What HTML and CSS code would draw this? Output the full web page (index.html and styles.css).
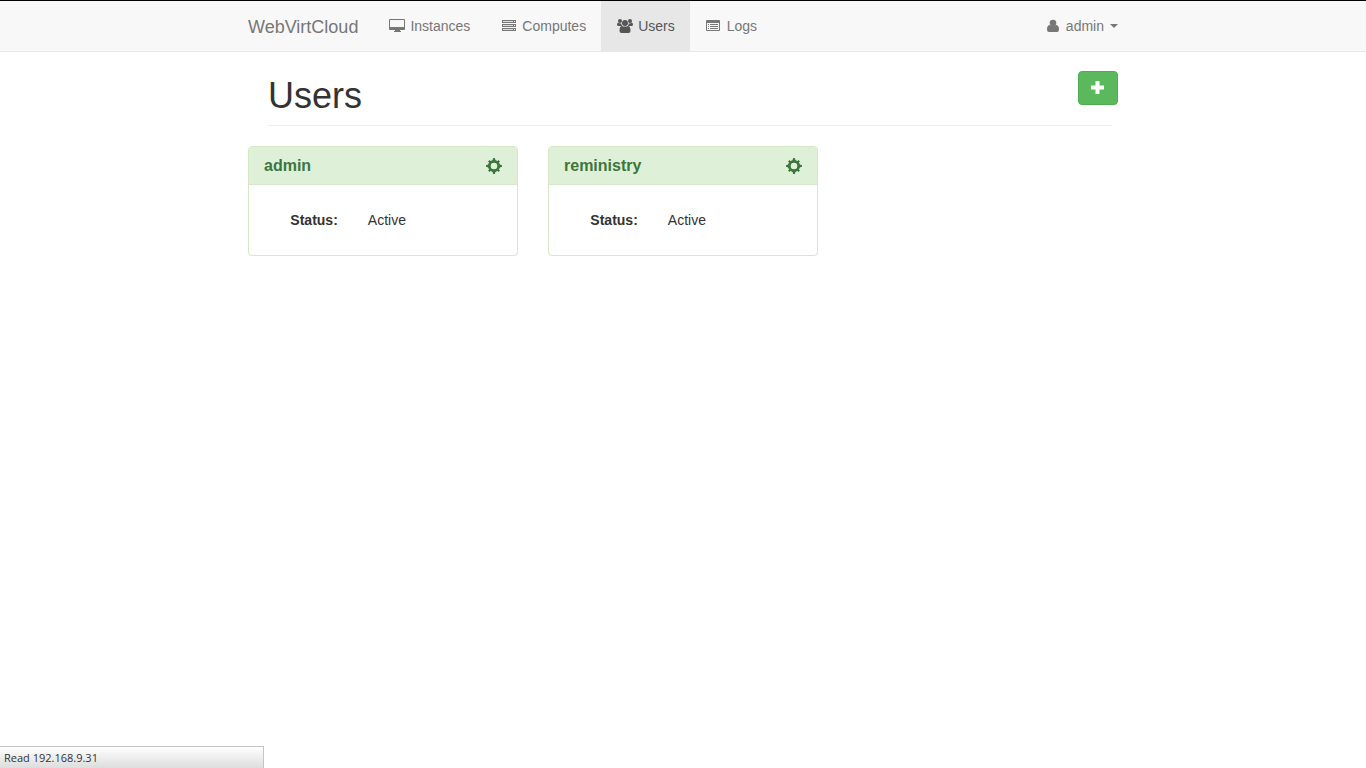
FILE: index.html
```html
<!DOCTYPE html>
<html lang="en">
<head>
<meta charset="utf-8">
<meta name="viewport" content="width=device-width, initial-scale=1">
<title>WebVirtCloud - Users</title>
<link rel="stylesheet" href="styles.css">
</head>
<body>
<svg class="sprite" aria-hidden="true">
  <symbol id="cog" viewBox="0 0 16 16">
    <circle cx="8" cy="8" r="4.700" fill="none" stroke="currentColor" stroke-width="2.800"/>
    <path fill="currentColor" d="M7.200 0h1.600l1 3H6.200zM7.200 16h1.600l1-3H6.200zM0 7.200v1.600l3 1V6.200zM16 7.200v1.600l-3 1V6.200z"/>
    <path stroke="currentColor" stroke-width="2.200" d="M2.800 2.800l2 2M11.200 11.200l2 2M2.800 13.200l2-2M11.200 4.800l2-2"/>
  </symbol>
</svg>
<nav class="navbar">
  <div class="container navbar-inner">
    <a class="brand" href="#">WebVirtCloud</a>
    <ul class="nav">
      <li><a class="nav-link" href="#">
        <svg class="icon" viewBox="0 0 18 14" fill="currentColor" aria-hidden="true"><path fill-rule="evenodd" d="M2 0h14q1 0 1 1v9q0 1-1 1h-4v1h1v1H6v-1h1v-1H2q-1 0-1-1V1q0-1 1-1zm0 1v7h14V1z"/></svg>
        Instances</a></li>
      <li><a class="nav-link" href="#">
        <svg class="icon" viewBox="0 0 18 14" fill="currentColor" aria-hidden="true"><path fill-rule="evenodd" d="M2 1h14v3H2zM3 2v1h10V2zM14 2v1h1V2zM2 5h14v3H2zM3 6v1h10V6zM14 6v1h1V6zM2 9h14v3H2zM3 10v1h10v-1zM14 10v1h1v-1z"/><path opacity=".2" d="M3 2h10v1H3zM3 6h10v1H3zM3 10h10v1H3z"/></svg>
        Computes</a></li>
      <li><a class="nav-link active" href="#" aria-current="page">
        <svg class="icon" viewBox="0 0 18 14" fill="currentColor" aria-hidden="true"><circle cx="4" cy="2" r="2"/><circle cx="14" cy="2" r="2"/><circle cx="9" cy="4" r="3"/><path d="M1 6q0-2.500 1.300-2.500Q4 4.800 5.200 4.300 5.300 6 6.200 7H2.500Q1 7 1 6zM17 6q0-2.500-1.300-2.500Q14 4.800 12.800 4.300 12.700 6 11.800 7h3.700Q17 7 17 6zM3.500 12q0-5 2.500-5 3 1 6 0 2.500 0 2.500 5 0 2-2 2h-7q-2 0-2-2z"/></svg>
        Users</a></li>
      <li><a class="nav-link" href="#">
        <svg class="icon" viewBox="0 0 18 14" fill="currentColor" aria-hidden="true"><path fill-rule="evenodd" d="M2 1h12q1 0 1 1v9q0 1-1 1H2q-1 0-1-1V2q0-1 1-1zm0 3v7h12V4z"/><path d="M3 5h1v1H3zM5 5h8v1H5zM3 7h1v1H3zM5 7h8v1H5zM3 9h1v1H3zM5 9h8v1H5z"/></svg>
        Logs</a></li>
    </ul>
    <button class="account" type="button" aria-haspopup="true">
      <svg class="icon" viewBox="0 0 18 14" fill="currentColor" aria-hidden="true"><circle cx="9" cy="4" r="3.300"/><path d="M3 10.500Q3 6 6 6q3 2 6 0 3 0 3 4.500 0 2.500-2 2.500H5q-2 0-2-2.500z"/></svg>
      admin
      <span class="caret"></span>
    </button>
  </div>
</nav>
<main class="container">
  <header class="page-header">
    <h1>Users</h1>
    <button class="add" type="button" aria-label="Add user">
      <svg viewBox="0 0 14 14" width="14" height="14" fill="currentColor" aria-hidden="true"><path d="M4.500 0h4v4.500H13v4H8.500V13h-4V8.500H0v-4h4.500z"/></svg>
    </button>
  </header>
  <div class="cards">
    <section class="card">
      <div class="card-head"><h2>admin</h2><button class="settings" type="button" aria-label="Edit admin"><svg width="16" height="16"><use href="#cog"/></svg></button></div>
      <dl class="card-body"><dt>Status:</dt><dd>Active</dd></dl>
    </section>
    <section class="card">
      <div class="card-head"><h2>reministry</h2><button class="settings" type="button" aria-label="Edit reministry"><svg width="16" height="16"><use href="#cog"/></svg></button></div>
      <dl class="card-body"><dt>Status:</dt><dd>Active</dd></dl>
    </section>
  </div>
</main>
<div class="status-bar" role="status">Read 192.168.9.31</div>
</body>
</html>
```
FILE: styles.css
```css
* {
  box-sizing: border-box;
}

body {
  margin: 0;
  border-top: 1px solid #000;
  background: #fff;
  color: #333;
  font: 14px/20px "Liberation Sans", Arial, sans-serif;
}

h1, h2, ul, dl, dd {
  margin: 0;
  padding: 0;
}

a {
  text-decoration: none;
}

button {
  padding: 0;
  border: 0;
  background: none;
  font: inherit;
  cursor: pointer;
}

.sprite {
  position: absolute;
  width: 0;
  height: 0;
}

.container {
  max-width: 900px;
  margin: 0 auto;
  padding: 0 15px;
}

.navbar {
  border-bottom: 1px solid #e7e7e7;
  background: #f8f8f8;
}

.navbar-inner,
.nav {
  display: flex;
}

.nav {
  list-style: none;
}

.brand {
  padding: 16px 15px 14px 0;
  color: #777;
  font-size: 18px;
}

.nav-link,
.account {
  display: flex;
  align-items: center;
  gap: 4px;
  padding: 15px;
  color: #777;
}

.nav-link.active {
  background: #e7e7e7;
  color: #555;
}

.account {
  margin-left: auto;
  padding-right: 0;
}

.icon {
  flex: none;
  width: 18px;
  height: 14px;
}

.caret {
  margin-left: 2px;
  border: 4px solid transparent;
  border-top-color: currentColor;
  border-bottom: 0;
}

.page-header {
  display: flex;
  align-items: flex-start;
  margin: 19px 0 20px 20px;
}

.page-header h1 {
  flex: 1;
  padding: 5px 0 9px;
  margin-right: -34px;
  border-bottom: 1px solid #eee;
  font-size: 36px;
  font-weight: 400;
  line-height: 40px;
}

.add {
  display: flex;
  align-items: center;
  justify-content: center;
  width: 40px;
  height: 34px;
  border: 1px solid #4cae4c;
  border-radius: 4px;
  background: #5cb85c;
  color: #fff;
}

.cards {
  display: grid;
  grid-template-columns: repeat(3, 1fr);
  gap: 30px;
}

.card {
  border: 1px solid #d6e9c6;
  border-radius: 4px;
  box-shadow: 0 1px 1px rgba(0, 0, 0, 0.05);
}

.card-head {
  display: flex;
  align-items: center;
  justify-content: space-between;
  padding: 9px 15px;
  border-bottom: 1px solid #d6e9c6;
  border-radius: 3px 3px 0 0;
  background: #dff0d8;
  color: #3c763d;
}

.card-head h2 {
  font-size: 16px;
  line-height: 19px;
}

.settings {
  display: flex;
  color: inherit;
}

.card-body {
  display: grid;
  grid-template-columns: 7fr 13fr;
  gap: 30px;
  padding: 25px 14px 25px 16px;
}

.card-body dt {
  font-weight: 700;
  text-align: right;
}

.status-bar {
  position: fixed;
  bottom: 0;
  left: 0;
  width: 264px;
  padding: 1px 4px;
  border: solid #c4c4c4;
  border-width: 1px 1px 0 0;
  background: linear-gradient(#fff, #ddd);
  font: 11px/19px "Open Sans", "Noto Sans", sans-serif;
}
```
